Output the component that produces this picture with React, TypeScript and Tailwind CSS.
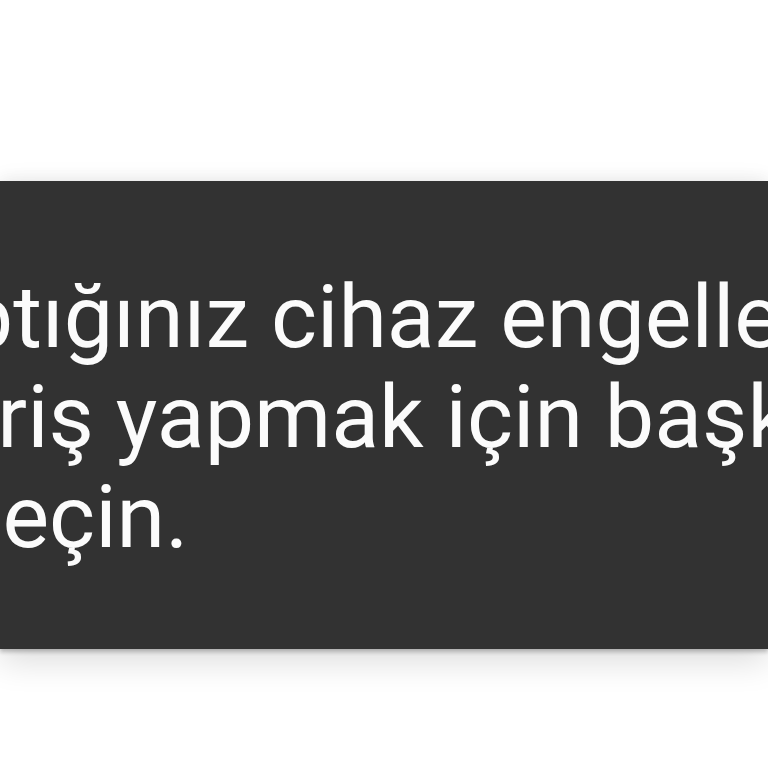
const lines = [
  { text: 'yaptığınız cihaz engellendi.', offset: 'ml-[-125px]' },
  { text: 'Giriş yapmak için başka bir cihaza', offset: 'ml-[-84px]' },
  { text: 'geçin.', offset: 'ml-[-47px]' },
];

const Snackbar = () => (
  <div className="mt-[181px] h-[468px] w-full bg-[#323232] pt-[86px] shadow-[0_-3px_14px_rgba(0,0,0,0.05),0_3px_4px_rgba(0,0,0,0.22),0_12px_32px_rgba(0,0,0,0.14)]">
    <div className="font-['Roboto',sans-serif] text-[88px] leading-[100px] text-[#fbfbfb]">
      {lines.map((line) => (
        <div key={line.text} className={`whitespace-nowrap ${line.offset}`}>
          {line.text}
        </div>
      ))}
    </div>
  </div>
);

const App = () => (
  <div className="h-[768px] w-[768px] overflow-hidden bg-white">
    <Snackbar />
  </div>
);

export default App;
